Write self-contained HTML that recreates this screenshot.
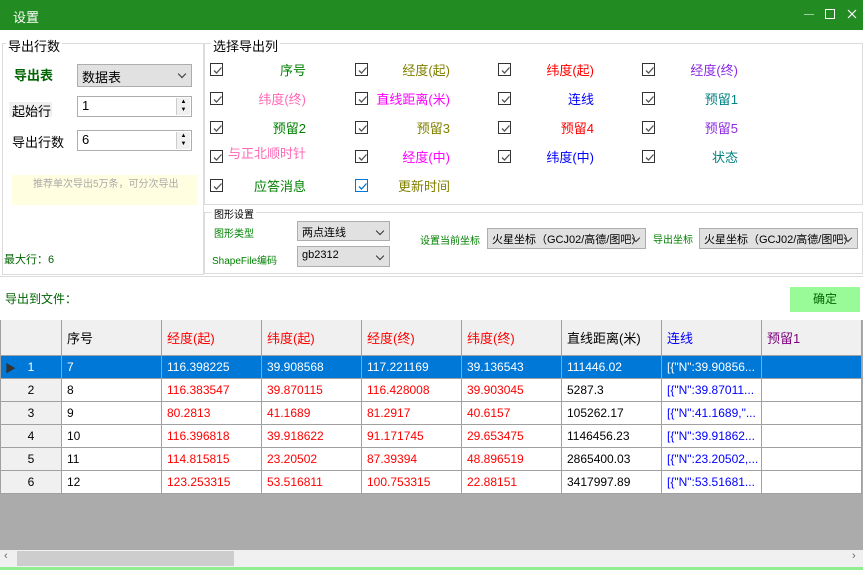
<!DOCTYPE html>
<html><head><meta charset="utf-8"><style>
*{margin:0;padding:0;box-sizing:border-box}
body{width:863px;height:570px;background:#fff;position:relative;overflow:hidden;font-family:"Liberation Sans","Noto Sans CJK SC",sans-serif;font-size:12px;color:#000}
.a{position:absolute;white-space:nowrap}
.gb{position:absolute;border:1px solid #dcdcdc}
.cb{position:absolute;width:13px;height:13px;border:1px solid #333;background:#fff}
.cb svg{position:absolute;left:1px;top:1px}
.lb{position:absolute;font-size:13px;text-align:right;width:120px;white-space:nowrap}
.sel{position:absolute;background:#e1e1e1;border:1px solid #adadad;font-size:12px;padding:2px 4px;white-space:nowrap;overflow:hidden}
.sel:after{content:"";position:absolute;right:6px;top:6px;width:5px;height:5px;border-right:1px solid #333;border-bottom:1px solid #333;transform:rotate(45deg)}
.num{position:absolute;background:#fff;border:1px solid #adadad;font-size:13px;padding:1px 4px}
.sp{position:absolute;right:1px;top:1px;width:14px;height:17px;border-left:1px solid #ccc;font-size:6px;line-height:8px;text-align:center;color:#000;background:#f0f0f0}
table{position:absolute;left:0;top:320px;border-collapse:collapse;font-size:12px}
td{border:1px solid #a0a0a0;height:23px;width:100px;padding:0 5px;white-space:nowrap;overflow:hidden;max-width:100px;background:#fff}
tr.h td{height:35px;background:#f0f0f0;font-size:13px;border-top:none}
td.rh{width:61px;min-width:61px;background:#f0f0f0;text-align:center;padding:0}
tr.s td{background:#0078d7;color:#fff}
.r{color:#f00}.b{color:#00f}
</style></head><body>
<div class="a" style="left:0;top:0;width:863px;height:30px;background:#228b22"></div>
<div class="a" style="left:13px;top:7px;color:#fff;font-size:13px">设置</div>
<div class="a" style="left:804px;top:14px;width:10px;height:1px;background:#9ecf9e"></div>
<div class="a" style="left:825px;top:9px;width:10px;height:10px;border:1px solid #fff"></div>
<svg class="a" style="left:847px;top:9px" width="10" height="10"><path d="M1 1L9 9M9 1L1 9" stroke="#fff" stroke-width="1.2"/></svg>

<div class="gb" style="left:2px;top:43px;width:202px;height:232px"></div>
<div class="a" style="left:6px;top:36px;background:#fff;padding:0 2px;font-size:13px">导出行数</div>
<div class="a" style="left:14px;top:65px;font-size:13px;font-weight:bold;color:#006400">导出表</div>
<div class="sel" style="left:77px;top:64px;width:115px;height:23px;font-size:13px">数据表</div>
<div class="a" style="left:9px;top:102px;width:43px;height:15px;background:#f0f0f0"></div>
<div class="a" style="left:12px;top:101px;font-size:13px">起始行</div>
<div class="num" style="left:77px;top:96px;width:115px;height:21px">1<div class="sp">▲<br>▼</div></div>
<div class="a" style="left:12px;top:132px;font-size:13px">导出行数</div>
<div class="num" style="left:77px;top:130px;width:115px;height:21px">6<div class="sp">▲<br>▼</div></div>
<div class="a" style="left:12px;top:175px;width:185px;height:30px;background:#fffee0"></div>
<div class="a" style="left:33px;top:175px;font-size:10px;color:#aaa">推荐单次导出5万条，可分次导出</div>
<div class="a" style="left:4px;top:251px;font-size:11px;color:#006400">最大行：6</div>

<div class="gb" style="left:204px;top:43px;width:659px;height:162px"></div>
<div class="a" style="left:211px;top:36px;background:#fff;padding:0 2px;font-size:13px">选择导出列</div>

<div class="gb" style="left:204px;top:212px;width:659px;height:62px"></div>
<div class="a" style="left:212px;top:206px;background:#fff;padding:0 2px;font-size:10px">图形设置</div>
<div class="a" style="left:214px;top:225px;font-size:10px;color:#008000">图形类型</div>
<div class="sel" style="left:297px;top:221px;width:93px;height:20px;font-size:11px">两点连线</div>
<div class="a" style="left:212px;top:252px;font-size:10px;color:#008000">ShapeFile编码</div>
<div class="sel" style="left:297px;top:246px;width:93px;height:21px;font-size:11px">gb2312</div>
<div class="a" style="left:420px;top:232px;font-size:10px;color:#008000">设置当前坐标</div>
<div class="sel" style="left:487px;top:228px;width:159px;height:21px;font-size:11px">火星坐标（GCJ02/高德/图吧）</div>
<div class="a" style="left:653px;top:231px;font-size:10px;color:#008000">导出坐标</div>
<div class="sel" style="left:699px;top:228px;width:159px;height:21px;font-size:11px">火星坐标（GCJ02/高德/图吧）</div>
<div class="a" style="left:0;top:276px;width:863px;height:1px;background:#dcdcdc"></div>

<div class="a" style="left:5px;top:290px;font-size:12px;color:#006400">导出到文件：</div>
<div class="a" style="left:790px;top:287px;width:70px;height:25px;background:#98fb98;color:#006400;font-size:12px;text-align:center;line-height:25px">确定</div>

<div id="cbs"></div>
<script>
var rows=[69,98,127,156,185],cx=[210,355,498,642],lx=[306,450,594,738];
var L=[[["序号","#008000"],["经度(起)","#808000"],["纬度(起)","#f00"],["经度(终)","#8a2be2"]],
[["纬度(终)","#ff69b4"],["直线距离(米)","#f0f"],["连线","#00f"],["预留1","#008080"]],
[["预留2","#008000"],["预留3","#808000"],["预留4","#f00"],["预留5","#8a2be2"]],
[["与正北顺时针","#ff69b4"],["经度(中)","#f0f"],["纬度(中)","#00f"],["状态","#008080"]],
[["应答消息","#008000"],["更新时间","#808000"]]];
var h="";
L.forEach(function(r,i){r.forEach(function(c,j){var y=rows[i];var blue=(i==4&&j==1);
h+='<div class="cb" style="left:'+cx[j]+'px;top:'+(y-6)+'px;border-color:'+(blue?'#0078d7':'#333')+'"><svg width="11" height="11"><path d="M2 5.5L4.5 8L9.5 2.5" stroke="'+(blue?'#0078d7':'#555')+'" stroke-width="1.3" fill="none"/></svg></div>';
var ty=(i==3&&j==0)?y-13:y-9;
h+='<div class="lb" style="left:'+(lx[j]-120)+'px;top:'+ty+'px;color:'+c[1]+'">'+c[0]+'</div>';});});
document.getElementById('cbs').innerHTML=h;
</script>

<div class="a" style="left:0;top:320px;width:863px;height:230px;background:#ababab"></div>
<table>
<tr class="h"><td class="rh"></td><td>序号</td><td class="r">经度(起)</td><td class="r">纬度(起)</td><td class="r">经度(终)</td><td class="r">纬度(终)</td><td>直线距离(米)</td><td class="b">连线</td><td style="color:#800080">预留1</td></tr>
<tr class="s"><td class="rh" style="position:relative"><span style="position:absolute;left:4px;top:4px;color:#333;font-size:11px">▶</span>1</td><td>7</td><td>116.398225</td><td>39.908568</td><td>117.221169</td><td>39.136543</td><td>111446.02</td><td>[{"N":39.90856...</td><td></td></tr>
<tr><td class="rh">2</td><td>8</td><td class="r">116.383547</td><td class="r">39.870115</td><td class="r">116.428008</td><td class="r">39.903045</td><td>5287.3</td><td class="b">[{"N":39.87011...</td><td></td></tr>
<tr><td class="rh">3</td><td>9</td><td class="r">80.2813</td><td class="r">41.1689</td><td class="r">81.2917</td><td class="r">40.6157</td><td>105262.17</td><td class="b">[{"N":41.1689,"...</td><td></td></tr>
<tr><td class="rh">4</td><td>10</td><td class="r">116.396818</td><td class="r">39.918622</td><td class="r">91.171745</td><td class="r">29.653475</td><td>1146456.23</td><td class="b">[{"N":39.91862...</td><td></td></tr>
<tr><td class="rh">5</td><td>11</td><td class="r">114.815815</td><td class="r">23.20502</td><td class="r">87.39394</td><td class="r">48.896519</td><td>2865400.03</td><td class="b">[{"N":23.20502,...</td><td></td></tr>
<tr><td class="rh">6</td><td>12</td><td class="r">123.253315</td><td class="r">53.516811</td><td class="r">100.753315</td><td class="r">22.88151</td><td>3417997.89</td><td class="b">[{"N":53.51681...</td><td></td></tr>
</table>
<div class="a" style="left:0;top:550px;width:863px;height:17px;background:#f0f0f0"></div>
<div class="a" style="left:17px;top:551px;width:217px;height:15px;background:#cdcdcd"></div>
<div class="a" style="left:4px;top:550px;font-size:11px;color:#666">‹</div>
<div class="a" style="left:852px;top:550px;font-size:11px;color:#666">›</div>
<div class="a" style="left:0;top:567px;width:863px;height:3px;background:#90ee90"></div>
</body></html>
